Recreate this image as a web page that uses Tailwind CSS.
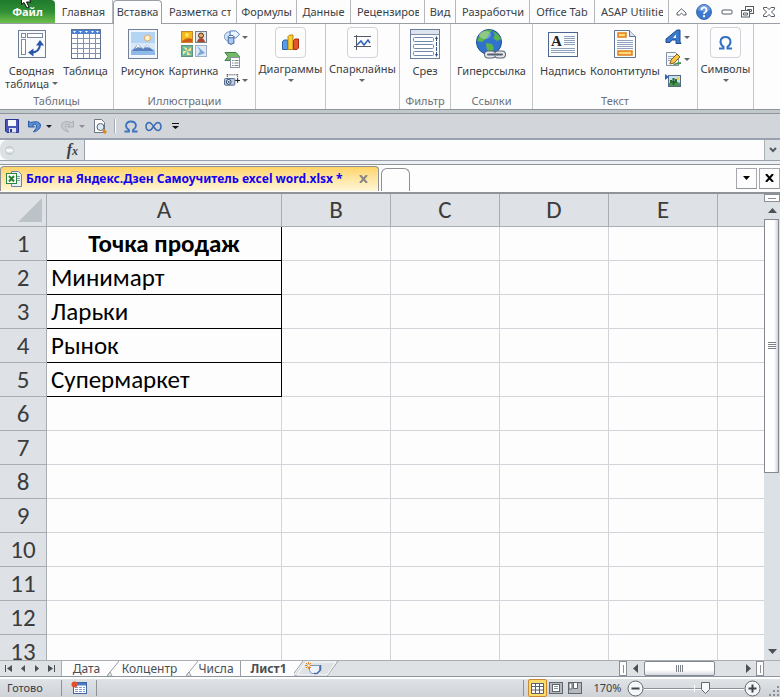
<!DOCTYPE html>
<html lang="ru">
<head>
<meta charset="utf-8">
<title>Книга</title>
<script src="https://cdn.jsdelivr.net/npm/@tailwindcss/browser@4"></script>
</head>
<body class="relative flex h-screen flex-col overflow-hidden bg-[#fdfdfd] font-['Noto_Sans',sans-serif] text-[11px] text-[#3b3f46]">

<!-- Ribbon tabs -->
<nav class="flex h-6 shrink-0 border-b border-[#9a9ea5] leading-[14px] [&>button]:shrink-0 [&>button]:overflow-hidden [&>button]:whitespace-nowrap" aria-label="Лента">
  <button class="w-[55px] rounded-tr bg-linear-to-b from-[#1f7a2c] via-[#2f8f35] to-[#6dc04c] font-bold text-white">Файл</button>
  <button class="w-[58px] border-r border-[#b4b7bb]">Главная</button>
  <button class="-mb-px w-[49px] rounded-t border border-b-0 border-[#9a9ea5] bg-[#fdfdfd] pb-[2px]">Вставка</button>
  <button class="w-[75px] border-r border-[#b4b7bb] pl-[7px] pr-[5px] text-left"><span class="block overflow-hidden">Разметка ст</span></button>
  <button class="w-[60px] border-r border-[#b4b7bb]">Формулы</button>
  <button class="w-[54px] border-r border-[#b4b7bb]">Данные</button>
  <button class="w-[74px] border-r border-[#b4b7bb] pl-[6px] pr-[5px] text-left"><span class="block overflow-hidden">Рецензиров</span></button>
  <button class="w-[31px] border-r border-[#b4b7bb]">Вид</button>
  <button class="w-[74px] border-r border-[#b4b7bb] pl-[6px] pr-[5px] text-left"><span class="block overflow-hidden">Разработчи</span></button>
  <button class="w-[65px] border-r border-[#b4b7bb]">Office Tab</button>
  <button class="w-[74px] border-r border-[#b4b7bb] pl-[6px] pr-[5px] text-left"><span class="block overflow-hidden">ASAP Utilitie</span></button>
  <div class="flex flex-1 items-center justify-between pl-[7px] pr-[5px]">
    <button aria-label="Свернуть ленту"><svg class="block" width="11" height="8" viewBox="0 0 11 8" fill="#fff" stroke="#555c68"><path d="M1 5 5.500.800 10 5V7H7.500L5.500 5.200 3.500 7H1Z"/></svg></button>
    <button aria-label="Справка"><svg class="block" width="16" height="16" viewBox="0 0 16 16"><circle cx="8" cy="8" r="7.500" fill="#3d78cf" stroke="#3f6fb5"/><path d="M2 6a6 5 0 0 1 12 0q-6 3-12 0Z" fill="#6f9de0"/><path d="M5.500 6a2.500 2.500 0 1 1 3.600 2.200Q8 8.800 8 10" fill="none" stroke="#fff" stroke-width="1.800"/><rect x="7" y="11.200" width="2" height="2" fill="#fff"/></svg></button>
    <button aria-label="Свернуть"><svg class="block" width="12" height="6" viewBox="0 0 12 6"><rect x="1" y="1" width="10" height="4" rx="1" fill="#fff" stroke="#555c68"/></svg></button>
    <button aria-label="Восстановить"><svg class="block" width="13" height="12" viewBox="0 0 13 12" fill="#fff" stroke="#555c68"><rect x="4.500" y=".5" width="8" height="7"/><path d="M6.500 3.500h4v2h-4z"/><rect x=".5" y="4.500" width="8" height="6.500"/><path d="M2.500 7h4v2h-4z"/></svg></button>
    <button aria-label="Закрыть"><svg class="block" width="12" height="10" viewBox="0 0 12 10"><path d="M.5.500h3.500L6 2.500 8 .5h3.500v1.500L8.500 5l3 3v1.500H8L6 7.500 4 9.500H.5V8l3-3-3-3Z" fill="#fff" stroke="#555c68"/></svg></button>
  </div>
</nav>

<!-- Ribbon groups -->
<div class="flex h-[85px] shrink-0 leading-[13px] [&_section]:flex [&_section]:shrink-0 [&_section]:flex-col [&_section]:border-r [&_section]:border-[#c3c6ca] [&_h2]:text-center [&_h2]:text-[#6b7079] [&_section>div]:flex [&_section>div]:h-[70px] [&_section>div]:items-start [&_section>div]:justify-center [&_button]:flex [&_button]:flex-col [&_button]:items-center [&_svg]:block">
  <section class="w-[114px]">
    <div class="pt-[5px]">
      <button class="w-[58px] gap-[5px]">
        <svg width="28" height="30" viewBox="0 0 28 30"><rect x=".5" y="1.500" width="27" height="27" fill="#f8fafc" stroke="#6c7c95"/><g fill="#fff" stroke="#7a8aa3"><rect x="3.500" y="4.500" width="4" height="4"/><rect x="9.500" y="4.500" width="15" height="4"/><rect x="3.500" y="10.500" width="4" height="15"/></g><path d="M13 23.500q9 0 9-9" fill="none" stroke="#2b55a8" stroke-width="2"/><path d="M18 16.500 22 11l4 5.500ZM15.500 19.500 10 23.500l5.500 4Z" fill="#2b55a8"/></svg>
        <span class="text-center">Сводная<br>таблица <i class="mb-[3px] inline-block border-x-[3px] border-t-[3px] border-x-transparent border-t-[#62666d]"></i></span>
      </button>
      <button class="w-[50px] gap-[5px]">
        <svg width="30" height="30" viewBox="0 0 30 30"><rect x=".5" y=".5" width="29" height="29" fill="#fff" stroke="#5e7294"/><rect x="1" y="1" width="28" height="4" fill="#4a80d6"/><path d="M2 2h3L3.500 4ZM8 2h3L9.500 4ZM14 2h3l-1.500 2ZM20 2h3l-1.500 2ZM25 2h3l-1.500 2Z" fill="#fff"/><path d="M1 9.500h28M1 14.500h28M1 19.500h28M1 24.500h28M6.500 5v24M12.500 5v24M18.500 5v24M24.500 5v24" stroke="#8492ab"/></svg>
        <span>Таблица</span>
      </button>
    </div>
    <h2>Таблицы</h2>
  </section>
  <section class="w-[142px]">
    <div class="pr-[4px] pt-[5px]">
      <button class="w-[50px] gap-[5px]">
        <svg width="30" height="30" viewBox="0 0 30 30"><rect x=".5" y=".5" width="29" height="29" fill="#f2f5f9" stroke="#71819b"/><rect x="3" y="3" width="24" height="23" fill="#b4d4f3"/><path d="M3 14h24v6H3Z" fill="#d9e8f7"/><circle cx="19.500" cy="9" r="3" fill="#fff3cd" stroke="#e6a45c"/><path d="M3 23l7-8 5 5 4-4 8 7Z" fill="#5b80bb"/><path d="M10 15l3 4-3-1-3 2ZM19 16l3 3-3-1-2 1Z" fill="#fff"/><path d="M3 22h24v4H3Z" fill="#8fb9e8"/></svg>
        <span>Рисунок</span>
      </button>
      <button class="w-[52px] gap-[5px]">
        <svg width="30" height="30" viewBox="0 0 30 30"><rect x="2.500" y="2.500" width="11" height="11" fill="#f6b818" stroke="#c9862b"/><path d="M3 12q5-4 10-2v3H3Z" fill="#cf5a1d"/><circle cx="8" cy="6" r="2" fill="#ffe566"/><rect x="16.500" y="2.500" width="11" height="11" fill="#e4e7ea" stroke="#777f8c"/><circle cx="22" cy="6.500" r="2.500" fill="#e7a266" stroke="#513326"/><path d="M18 13q1-4 4-4t4 4Z" fill="#a9472d"/><rect x="2.500" y="16.500" width="11" height="11" fill="#6fb69a" stroke="#5c9080"/><path d="m8 22-4-4 4 1ZM8 22l4-4v4ZM8 22l4 4H8ZM8 22l-4 4v-4Z" fill="#f7e69a"/><rect x="16.500" y="16.500" width="11" height="11" fill="#dce9f6" stroke="#a0afc5"/><path d="M18 17l8 7-8 3 3-5Z" fill="#7ba5da"/></svg>
        <span>Картинка</span>
      </button>
      <div class="flex w-[28px] flex-col gap-[5px] pl-[4px]">
        <button class="!flex-row gap-[2px]" aria-label="Фигуры"><svg width="17" height="17" viewBox="0 0 17 17"><circle cx="5.500" cy="7.500" r="5" fill="#d8e7f7" stroke="#6d8fbc"/><path d="M6.500 1.500h6l4 3.500-4 4h-6Z" fill="#eef5fc" stroke="#4a77b5"/><path d="M4.500 7.500v7q3 2.500 6 0v-7Z" fill="#a9c8ea" stroke="#375f9e"/><ellipse cx="7.500" cy="7.500" rx="3" ry="1.300" fill="#fff" stroke="#375f9e"/></svg><i class="shrink-0 border-x-[3px] border-t-[3px] border-x-transparent border-t-[#62666d]"></i></button>
        <button class="self-start" aria-label="SmartArt"><svg width="17" height="17" viewBox="0 0 17 17"><path d="M1 1.500h11l3.500 4-3.500 4H1l3-4Z" fill="#73b968" stroke="#3b8544"/><rect x="6.500" y="6.500" width="9" height="10" fill="#fff" stroke="#8791a0"/><path d="M8 9.500h1.500m1 0h4M8 12h1.500m1 0h4M8 14.500h1.500m1 0h4" stroke="#798391"/></svg></button>
        <button class="!flex-row gap-[2px]" aria-label="Снимок"><svg width="17" height="14" viewBox="0 0 17 14"><path d="M3 1.500h12M3.500 1v5M14.500 1v4" stroke="#111" stroke-dasharray="1 1"/><rect x=".5" y="5.500" width="11" height="7" rx="1" fill="#b9cce3" stroke="#4e6484"/><circle cx="5" cy="9" r="2.500" fill="#fff" stroke="#1e3558"/><circle cx="5" cy="9" r="1" fill="#1e3558"/><path d="M12 7.500h5M14.500 5v5" stroke="#111"/></svg><i class="shrink-0 border-x-[3px] border-t-[3px] border-x-transparent border-t-[#62666d]"></i></button>
      </div>
    </div>
    <h2>Иллюстрации</h2>
  </section>
  <section class="w-[70px]">
    <div class="pt-[3px]">
      <button>
        <svg class="h-[31px] w-[31px] rounded border border-[#cfd2d8]" viewBox="0 0 29 29"><path d="M6.500 13.500 8 12h3.500v9.500h-5Z" fill="#5b9be2" stroke="#2d65ac"/><path d="M12 8.500 13.500 7H17v14.500h-5Z" fill="#f8ce32" stroke="#bd8613"/><path d="M17.500 12.500 19 11h3.500v9l-1.500 1.500h-3.500Z" fill="#e4542b" stroke="#a92c13"/></svg>
        <span class="mt-[4px]">Диаграммы</span>
        <i class="mt-[4px] border-x-[3px] border-t-[3px] border-x-transparent border-t-[#62666d]"></i>
      </button>
    </div>
  </section>
  <section class="w-[74px]">
    <div class="pt-[3px]">
      <button>
        <svg class="h-[31px] w-[31px] rounded border border-[#cfd2d8]" viewBox="0 0 29 29" fill="none"><path d="M6 8.500h17M6 18.500h17M8.500 7v15" stroke="#535a66"/><path d="m9 17 4-4 3 4 4-5 2 3" stroke="#2f63b5" stroke-width="1.500"/></svg>
        <span class="mt-[4px]">Спарклайны</span>
        <i class="mt-[4px] border-x-[3px] border-t-[3px] border-x-transparent border-t-[#62666d]"></i>
      </button>
    </div>
  </section>
  <section class="w-[51px]">
    <div class="pt-[5px]">
      <button class="gap-[5px]">
        <svg width="30" height="30" viewBox="0 0 30 30"><rect x=".5" y=".5" width="29" height="29" fill="#fbfcfd" stroke="#6a7d9c"/><path d="M1 5.500h28" stroke="#8190a8"/><rect x="1" y="1" width="28" height="4" fill="#dce4ee"/><g fill="#fff" stroke="#7488aa"><rect x="3.500" y="8.500" width="20" height="4" rx="1"/><rect x="3.500" y="15.500" width="20" height="4" rx="1"/><rect x="3.500" y="22.500" width="20" height="4" rx="1"/></g><path d="M26.500 8v19" stroke="#2d5087" stroke-dasharray="4 1"/><path d="m25 10 1.500-3L28 10Zm0 15 1.500 3 1.500-3Z" fill="#2d5087"/></svg>
        <span>Срез</span>
      </button>
    </div>
    <h2>Фильтр</h2>
  </section>
  <section class="w-[82px]">
    <div class="pt-[5px]">
      <button class="gap-[5px]">
        <svg width="30" height="30" viewBox="0 0 30 30"><circle cx="13" cy="13" r="12.500" fill="#2f73cf" stroke="#1b4a91"/><path d="M4 5q6-5 12-4l-3 4-2 4-5 4-5-1Zm13-3q6 3 8 8l-4 2-4-3 2-3ZM10 14l6 1 2 4-3 6q-5-3-5-11Z" fill="#5cb44a"/><ellipse cx="9" cy="6" rx="6" ry="4" fill="#fff" opacity=".3"/><g fill="none" stroke="#586170" stroke-width="4"><rect x="10" y="23.500" width="8" height="4" rx="2"/><rect x="20" y="23.500" width="8" height="4" rx="2"/></g><g fill="none" stroke="#e4e7ec" stroke-width="2"><rect x="10" y="23.500" width="8" height="4" rx="2"/><rect x="20" y="23.500" width="8" height="4" rx="2"/></g><path d="M16 25.500h6" stroke="#586170" stroke-width="2"/></svg>
        <span>Гиперссылка</span>
      </button>
    </div>
    <h2>Ссылки</h2>
  </section>
  <section class="w-[165px]">
    <div class="pr-[4px] pt-[5px]">
      <button class="w-[54px] gap-[5px]">
        <svg width="30" height="30" viewBox="0 0 30 30"><rect x=".5" y="3.500" width="29" height="24" fill="#fbfcfe" stroke="#4c658f"/><text x="3" y="17" font-family="Liberation Serif" font-weight="bold" font-size="15" fill="#222">A</text><path d="M16 7.500h11M16 9.500h11M16 11.500h11M16 13.500h11M16 15.500h11M3 19.500h24M3 21.500h24M3 23.500h24" stroke="#8fa1bd"/></svg>
        <span>Надпись</span>
      </button>
      <button class="w-[70px] gap-[5px]">
        <svg width="22" height="30" viewBox="0 0 22 30"><path d="M.5 1.500h15l6 6v21H.5Z" fill="#fbfcfe" stroke="#5f7597"/><path d="M15.500 1.500v6h6" fill="#d9e2ee" stroke="#5f7597"/><path d="M3 11.500h16M3 13.500h16M3 15.500h16M3 17.500h16M3 19.500h16" stroke="#8fa1bd"/><rect x="4" y="4" width="8" height="4" fill="#ffdb7b" stroke="#df7d15" stroke-width="1.500"/><rect x="4" y="22" width="14" height="4" fill="#ffdb7b" stroke="#df7d15" stroke-width="1.500"/></svg>
        <span>Колонтитулы</span>
      </button>
      <div class="flex w-[30px] flex-col gap-[6px] pl-[5px]">
        <button class="!flex-row gap-[2px]" aria-label="WordArt"><svg width="17" height="16" viewBox="0 0 17 16"><path d="M1 10 12 1h3v12l1 1.500h-5V11H7l-2 2.500H1Z" fill="#3a78cc" stroke="#1e4d94"/><path d="M8 9h3V5.500Z" fill="#fff"/></svg><i class="shrink-0 border-x-[3px] border-t-[3px] border-x-transparent border-t-[#62666d]"></i></button>
        <button class="!flex-row gap-[2px]" aria-label="Строка подписи"><svg width="17" height="16" viewBox="0 0 17 16"><path d="M1.500 1.500h9l3 3v10h-12Z" fill="#f4f6f9" stroke="#8391a6"/><path d="M3 5.500h6m-6 2h6m-6 2h4" stroke="#9dabc0"/><path d="m6 9 6-6 3 3-6 6-4 1Z" fill="#f5c64a" stroke="#885e1e"/><path d="M8 13q5-2 8-2v2l-7 1Z" fill="#45924a"/></svg><i class="shrink-0 border-x-[3px] border-t-[3px] border-x-transparent border-t-[#62666d]"></i></button>
        <button class="self-start" aria-label="Объект"><svg width="17" height="15" viewBox="0 0 17 15"><rect x="3.500" y="2.500" width="12" height="11" fill="#c7dff3" stroke="#566987"/><path d="M4 10q6-3 11 0v3H4Z" fill="#4c9550"/><path d="M8.500 12V5M6 7v2h5V6" fill="none" stroke="#216b31" stroke-width="2"/><circle cx="13" cy="5.500" r="1.500" fill="#f6cf4d"/><path d="M0 1l4 3-4 3Z" fill="#2d67bd"/></svg></button>
      </div>
    </div>
    <h2>Текст</h2>
  </section>
  <section class="w-[56px]">
    <div class="pt-[3px]">
      <button>
        <svg class="h-[31px] w-[31px] rounded border border-[#cfd2d8]" viewBox="0 0 29 29"><path d="M8 20.500h4.500v-1.700Q9.500 17 9.500 13.500 10 9 14.500 9t5 4.500q0 3.500-3 5.300v1.700H21" fill="none" stroke="#3370c4" stroke-width="2"/></svg>
        <span class="mt-[4px]">Символы</span>
        <i class="mt-[4px] border-x-[3px] border-t-[3px] border-x-transparent border-t-[#62666d]"></i>
      </button>
    </div>
  </section>
</div>
<div class="h-[5px] shrink-0 border-y border-[#8e9499] bg-[#c2c9cd]"></div>

<!-- Quick access toolbar -->
<div class="flex h-[26px] shrink-0 items-center border-b-2 border-[#98a1ad] bg-[#d2d5da] pl-[5px]">
  <button aria-label="Сохранить"><svg class="block" width="14" height="14" viewBox="0 0 14 14"><path d="M.5.500h13v13H2L.5 12Z" fill="#4a55b8" stroke="#2b3590"/><rect x="3" y="1" width="8" height="6" fill="#f6f8fc"/><rect x="4" y="9" width="7" height="4.500" fill="#dfe4ef"/><rect x="5" y="10" width="2" height="3" fill="#2b3590"/></svg></button>
  <button class="ml-[9px]" aria-label="Отменить"><svg class="block" width="13" height="14" viewBox="0 0 13 14"><path d="M.5 2v6h6L4.500 6q3-2 4 .5.500 2.500-3 6.500 7-2 7-7-1-5-10-2.500Z" fill="#5a8fd8" stroke="#2d5ca5"/></svg></button>
  <i class="ml-[5px] border-x-[3px] border-t-[3px] border-x-transparent border-t-[#222]"></i>
  <button class="ml-[9px]" aria-label="Вернуть"><svg class="block" width="13" height="14" viewBox="0 0 13 14"><path d="M12.500 2v6h-6l2-2q-3-2-4 .5-.5 2.500 3 6.500-7-2-7-7 1-5 10-2.500Z" fill="#c7cacf" stroke="#abafb5"/></svg></button>
  <i class="ml-[5px] border-x-[3px] border-t-[3px] border-x-transparent border-t-[#8c9096]"></i>
  <button class="ml-[8px]" aria-label="Просмотр"><svg class="block" width="15" height="15" viewBox="0 0 15 15"><path d="M1.500.500h7l3 3v10h-10Z" fill="#fff" stroke="#6f7784"/><circle cx="7.500" cy="8" r="3.500" fill="#dceaf8" stroke="#56657c"/><path d="m10 11 3 3" stroke="#d88a27" stroke-width="3"/></svg></button>
  <span class="ml-[6px] mr-[8px] h-[14px] w-[2px] border-l border-[#a5a9b0] bg-white"></span>
  <button aria-label="Символ"><svg class="block" width="14" height="13" viewBox="0 0 14 13"><path d="M.5 11.500H5V10Q2 8 2 5.500 2.500 1.500 7 1.500t5 4Q12 8 9 10v1.500h4.500" fill="none" stroke="#3d73bd" stroke-width="1.800"/></svg></button>
  <button class="ml-[7px]" aria-label="Формула"><svg class="block" width="17" height="11" viewBox="0 0 17 11"><path d="M8.500 5.500Q6 1.500 4 1.500 1 2 1 5.500T4 9.500q2 0 4.500-4t4.500-4q3 .5 3 4t-3 4q-2 0-4.500-4Z" fill="none" stroke="#3d6fb5" stroke-width="1.500"/></svg></button>
  <button class="ml-[10px]" aria-label="Настройка панели"><svg class="block" width="7" height="6" viewBox="0 0 7 6"><path d="M0 0h7v1H0ZM0 3h7L3.500 6Z" fill="#111"/></svg></button>
</div>

<!-- Formula bar -->
<div class="flex h-[21px] shrink-0 border-b border-[#98a1ad]">
  <div class="flex w-[84px] shrink-0 items-center justify-between rounded-l-lg bg-[#dce1e4] pl-[5px] pr-[6px]">
    <span class="h-[9px] w-[9px] rounded-full border border-[#c3c8cc] bg-linear-to-b from-[#c5cace] via-white to-[#c5cace]"></span>
    <button class="font-['Liberation_Serif',serif] text-[16px] font-bold italic leading-4" aria-label="Вставить функцию">f<span class="text-[12px]">x</span></button>
  </div>
  <input class="min-w-0 flex-1 border-l border-[#98a1ad] bg-[#fdfdfd] px-1 outline-none" aria-label="Строка формул">
  <button class="flex w-[16px] shrink-0 items-center justify-center border-l border-[#aab0b6] bg-[#dce1e4]" aria-label="Развернуть строку формул"><svg width="8" height="6" viewBox="0 0 8 6"><path d="m1 1 3 3 3-3" fill="none" stroke="#555b63" stroke-width="2"/></svg></button>
</div>
<div class="h-[4px] shrink-0 border-b border-[#8e9499] bg-[#eceff1]"></div>

<!-- Workbook tabs -->
<div class="flex h-[28px] shrink-0 items-end border-b border-[#8e9499] pb-px">
  <div class="flex h-[25px] w-[379px] shrink-0 items-center rounded-t border border-b-0 border-[#8c8f93] bg-linear-to-b from-[#ffd467] via-[#ffe6a4] to-[#fff7d8] pl-[5px] pr-[10px]">
    <svg class="mr-[4px] shrink-0" width="16" height="16" viewBox="0 0 16 16"><path d="M5.500.500h7l3 3v12h-10Z" fill="#e8eff8" stroke="#6c83a7"/><path d="M10 5.500h4m-4 2h4m-4 2h4" stroke="#84a0c8"/><rect x=".5" y="2.500" width="10" height="10" fill="#fff" stroke="#2b8738"/><path d="m3 5 5 5.500M8 5l-5 5.500" stroke="#24822f" stroke-width="2"/></svg>
    <span class="whitespace-nowrap text-[12px] font-bold text-[#1400f0]">Блог на Яндекс.Дзен Самоучитель excel word.xlsx *</span>
    <button class="ml-auto" aria-label="Закрыть вкладку"><svg class="block" width="9" height="8" viewBox="0 0 9 8"><path d="m1 0 7 8M8 0 1 8" stroke="#858585" stroke-width="2"/></svg></button>
  </div>
  <button class="ml-[2px] h-[23px] w-[29px] shrink-0 rounded-t-md border border-b-0 border-[#8c8f93]" aria-label="Новая вкладка"></button>
  <div class="ml-auto flex gap-[2px] self-center">
    <button class="flex h-[21px] w-[21px] items-center justify-center border border-[#a5a9af] border-b-[#8e9499]" aria-label="Список вкладок"><svg width="7" height="4" viewBox="0 0 7 4"><path d="M0 0h7L3.500 4Z"/></svg></button>
    <button class="flex h-[21px] w-[21px] items-center justify-center border border-[#a5a9af] border-b-[#8e9499]" aria-label="Закрыть книгу"><svg width="9" height="8" viewBox="0 0 9 8"><path d="m1 0 7 8M8 0 1 8" stroke="#000" stroke-width="2"/></svg></button>
  </div>
</div>

<!-- Worksheet -->
<main class="flex min-h-0 flex-1 border-t border-[#8e9499]">
  <div class="min-w-0 flex-1 overflow-hidden">
    <table class="w-[827px] table-fixed border-separate border-spacing-0 font-['Carlito','Calibri','Noto_Sans',sans-serif] text-[25px] leading-[33px] text-black [&_th]:border-b [&_th]:border-r [&_th]:border-[#a9aeb5] [&_th]:bg-[#dee2e6] [&_th]:p-0 [&_th]:font-normal [&_th]:text-[#3c3c3c] [&_td]:border-b [&_td]:border-r [&_td]:border-[#d2d4da] [&_td]:px-1 [&_td]:py-0 [&_tbody_tr]:h-[34px]">
      <colgroup><col class="w-[47px]"><col class="w-[235px]"><col class="w-[109px]"><col class="w-[109px]"><col class="w-[109px]"><col class="w-[109px]"><col class="w-[109px]"></colgroup>
      <thead><tr class="h-[33px] leading-[32px]"><th aria-label="Выделить всё"><svg class="ml-[18px] block" width="24" height="24" viewBox="0 0 24 24"><path d="M24 0v24H0Z" fill="#bcc3c8"/></svg></th><th>A</th><th>B</th><th>C</th><th>D</th><th>E</th><th></th></tr></thead>
      <tbody>
        <tr><th>1</th><td class="!border-black text-center font-bold">Точка продаж</td><td></td><td></td><td></td><td></td><td></td></tr>
        <tr><th>2</th><td class="!border-black">Минимарт</td><td></td><td></td><td></td><td></td><td></td></tr>
        <tr><th>3</th><td class="!border-black">Ларьки</td><td></td><td></td><td></td><td></td><td></td></tr>
        <tr><th>4</th><td class="!border-black">Рынок</td><td></td><td></td><td></td><td></td><td></td></tr>
        <tr><th>5</th><td class="!border-black">Супермаркет</td><td></td><td></td><td></td><td></td><td></td></tr>
        <tr><th>6</th><td></td><td></td><td></td><td></td><td></td><td></td></tr>
        <tr><th>7</th><td></td><td></td><td></td><td></td><td></td><td></td></tr>
        <tr><th>8</th><td></td><td></td><td></td><td></td><td></td><td></td></tr>
        <tr><th>9</th><td></td><td></td><td></td><td></td><td></td><td></td></tr>
        <tr><th>10</th><td></td><td></td><td></td><td></td><td></td><td></td></tr>
        <tr><th>11</th><td></td><td></td><td></td><td></td><td></td><td></td></tr>
        <tr><th>12</th><td></td><td></td><td></td><td></td><td></td><td></td></tr>
        <tr><th>13</th><td></td><td></td><td></td><td></td><td></td><td></td></tr>
      </tbody>
    </table>
  </div>
  <div class="flex w-[16px] shrink-0 flex-col bg-[#dce1e5]">
    <div class="flex h-[8px] items-center justify-center border border-[#8c9096] bg-white"><span class="h-px w-[8px] bg-[#8c9096]"></span></div>
    <button class="flex h-[17px] items-center justify-center" aria-label="Вверх"><svg width="9" height="5" viewBox="0 0 9 5"><path d="M0 5 4.500 0 9 5Z" fill="#4c5057"/></svg></button>
    <div class="flex-1">
      <div class="flex h-[60%] w-[15px] flex-col items-center justify-center gap-px border border-[#858a91] bg-linear-to-r from-white from-70% to-[#cdd2da]"><i class="h-px w-[8px] bg-[#7c8087]"></i><i class="h-px w-[8px] bg-[#7c8087]"></i><i class="h-px w-[8px] bg-[#7c8087]"></i><i class="h-px w-[8px] bg-[#7c8087]"></i></div>
    </div>
    <button class="flex h-[18px] items-center justify-center" aria-label="Вниз"><svg width="9" height="5" viewBox="0 0 9 5"><path d="M0 0h9L4.500 5Z" fill="#4c5057"/></svg></button>
  </div>
</main>

<!-- Sheet tabs -->
<div class="flex h-[17px] shrink-0 items-stretch border-b border-t border-b-[#8e969f] border-t-[#a9aeb5] bg-[#dee2e5] text-[12px] leading-[15px] [&_svg]:block [&_svg]:shrink-0">
  <div class="flex w-[62px] items-center justify-between border-r border-[#a9aeb5] pl-[5px] pr-[6px]">
    <button aria-label="Первый лист"><svg width="7" height="7" viewBox="0 0 7 7" fill="#4a4e55"><path d="M0 0h1v7H0ZM7 0v7L2 3.500Z"/></svg></button>
    <button aria-label="Предыдущий лист"><svg width="4" height="7" viewBox="0 0 4 7" fill="#4a4e55"><path d="M4 0v7L0 3.500Z"/></svg></button>
    <button aria-label="Следующий лист"><svg width="4" height="7" viewBox="0 0 4 7" fill="#4a4e55"><path d="M0 0v7l4-3.500Z"/></svg></button>
    <button aria-label="Последний лист"><svg width="7" height="7" viewBox="0 0 7 7" fill="#4a4e55"><path d="M6 0h1v7H6ZM0 0v7l5-3.500Z"/></svg></button>
  </div>
  <div class="flex bg-[#fdfdfd] text-[#4a4d53]">
    <button class="w-[45px] pl-[4px] text-center">Дата</button>
    <svg width="12" height="15" viewBox="0 0 12 15"><path d="M0 15 12 0M0 15 3 11l2 4Z" fill="none" stroke="#9a9fa6"/></svg>
    <button class="w-[67px] pr-[6px] text-center">Колцентр</button>
    <svg width="12" height="15" viewBox="0 0 12 15"><path d="M0 15 12 0M0 15 3 11l2 4Z" fill="none" stroke="#9a9fa6"/></svg>
    <button class="w-[43px] border-r border-[#9a9fa6] pr-[6px] text-center">Числа</button>
    <button class="w-[53px] pl-[2px] text-center font-bold">Лист1</button>
  </div>
  <button aria-label="Вставить лист"><svg width="48" height="15" viewBox="0 0 48 15"><path d="M0 0h10L0 14Z" fill="#fdfdfd"/><path d="M-2 15 9 0M33 15 44 0M-2 15h34" fill="none" stroke="#9a9fa6"/><path d="M3 14 12 1h30l-9 13Z" fill="#dee2e5" stroke="#fff"/><path d="M15.500 4.500h10v5l-3 3h-5l-2-3Z" fill="#eef3fa" stroke="#8196b8"/><path d="M20 12.500h3L26.500 9V4" fill="none" stroke="#4c6da7" stroke-width="1.500"/><path d="M14.500 1v7M11 4.500h7M12 2l5 5M17 2l-5 5" stroke="#dd8525"/><circle cx="14.500" cy="4.500" r="1.200" fill="#fff"/></svg></button>
  <div class="ml-auto flex items-stretch">
    <span class="flex w-[8px] items-center justify-center border border-[#8c9096] bg-white"><i class="h-[8px] w-px bg-[#8c9096]"></i></span>
    <button class="flex w-[17px] items-center justify-center" aria-label="Влево"><svg width="5" height="9" viewBox="0 0 5 9"><path d="M5 0v9L0 4.500Z" fill="#4c5057"/></svg></button>
    <div class="flex w-[71px] items-center justify-center gap-px rounded-xs border border-[#858a91] bg-linear-to-b from-white from-60% to-[#d5dae1]"><i class="h-[7px] w-px bg-[#7c8087]"></i><i class="h-[7px] w-px bg-[#7c8087]"></i><i class="h-[7px] w-px bg-[#7c8087]"></i><i class="h-[7px] w-px bg-[#7c8087]"></i></div>
    <button class="ml-[25px] flex w-[16px] items-center justify-center" aria-label="Вправо"><svg width="5" height="9" viewBox="0 0 5 9"><path d="M0 0v9l5-4.500Z" fill="#4c5057"/></svg></button>
    <span class="mr-[16px] flex w-[8px] items-center justify-center border border-[#8c9096] bg-white"><i class="h-[8px] w-px bg-[#8c9096]"></i></span>
  </div>
</div>

<!-- Status bar -->
<footer class="flex h-[20px] shrink-0 items-center border-t-2 border-white bg-linear-to-b from-[#dfe3e6] to-[#cfd3d8] [&_svg]:block">
  <span class="w-[61px] pl-[7px]">Готово</span>
  <span class="h-[16px] w-px bg-[#90949a]"></span>
  <button class="mx-[9px]" aria-label="Запись макроса"><svg width="16" height="14" viewBox="0 0 16 14"><rect x="2.500" y="1.500" width="13" height="11" fill="#fff" stroke="#40659f"/><rect x="3" y="2" width="12" height="2.500" fill="#4a7bc8"/><path d="M4 6.500h3m1 0h3m1 0h2M4 8.500h3m1 0h3m1 0h2M4 10.500h3m1 0h3m1 0h2" stroke="#7f9dcc"/><circle cx="3.500" cy="3.500" r="3" fill="#e0502c"/></svg></button>
  <span class="h-[16px] w-px bg-[#90949a]"></span>
  <div class="ml-auto flex items-center">
    <span class="mr-[4px] h-[16px] w-px bg-[#90949a]"></span>
    <button class="flex h-[18px] w-[19px] items-center justify-center rounded-xs border border-[#c98a35] bg-[#fddb6b]" aria-label="Обычный"><svg width="13" height="11" viewBox="0 0 13 11"><path d="M.5.500h12v10H.5ZM.5 3.500h12M.5 7h12M4.500.500v10M8.500.500v10" fill="#fff" stroke="#58616e"/></svg></button>
    <button class="ml-[2px]" aria-label="Разметка страницы"><svg width="14" height="12" viewBox="0 0 14 12"><rect x=".5" y=".5" width="13" height="11" fill="#b5bac1" stroke="#60656d"/><rect x="3.500" y="2.500" width="7" height="7" fill="#fff" stroke="#60656d"/><path d="M5 4.500h4m-4 2h4" stroke="#888d95"/></svg></button>
    <button class="ml-[5px]" aria-label="Страничный режим"><svg width="14" height="12" viewBox="0 0 14 12"><rect x=".5" y=".5" width="13" height="11" fill="#b5bac1" stroke="#60656d"/><path d="M1 1h3v6H1ZM5.500.500h4v6h-4Z" fill="#fff" stroke="#60656d"/></svg></button>
    <button class="ml-[11px] w-[29px]">170%</button>
    <button class="ml-[5px]" aria-label="Уменьшить"><svg width="17" height="17" viewBox="0 0 17 17"><circle cx="8.500" cy="8.500" r="7.500" fill="#f5f6f7" stroke="#63686f"/><path d="M4.500 8.500h8" stroke="#3f444b" stroke-width="2"/></svg></button>
    <div class="relative w-[100px]">
      <svg width="100" height="14" viewBox="0 0 100 14"><path d="M0 7.500h100" stroke="#8b9097"/><path d="M0 8.500h100M50.500 4v7" stroke="#fff"/><path d="M57.500 1.500h8v7l-4 4-4-4Z" fill="#f7f8f9" stroke="#63686f"/></svg>
      <input type="range" min="10" max="260" value="170" class="absolute inset-0 h-full w-full opacity-0" aria-label="Масштаб">
    </div>
    <button aria-label="Увеличить"><svg width="17" height="17" viewBox="0 0 17 17"><circle cx="8.500" cy="8.500" r="7.500" fill="#f5f6f7" stroke="#63686f"/><path d="M4.500 8.500h8M8.500 4.500v8" stroke="#3f444b" stroke-width="2"/></svg></button>
    <svg class="ml-[8px] self-end" width="11" height="11" viewBox="0 0 11 11" fill="#8b9097"><path d="M8 0h2v2H8ZM8 4h2v2H8ZM8 8h2v2H8ZM4 4h2v2H4ZM4 8h2v2H4ZM0 8h2v2H0Z"/></svg>
  </div>
</footer>

<!-- Mouse pointer -->
<svg class="pointer-events-none absolute left-[21px] top-0" width="12" height="9" viewBox="0 0 12 9"><path d="M.5-1v5.500L3 2.500l3 5.500 2-1-2.500-5H10L8-1Z" fill="#fff" stroke="#111"/></svg>
</body>
</html>
